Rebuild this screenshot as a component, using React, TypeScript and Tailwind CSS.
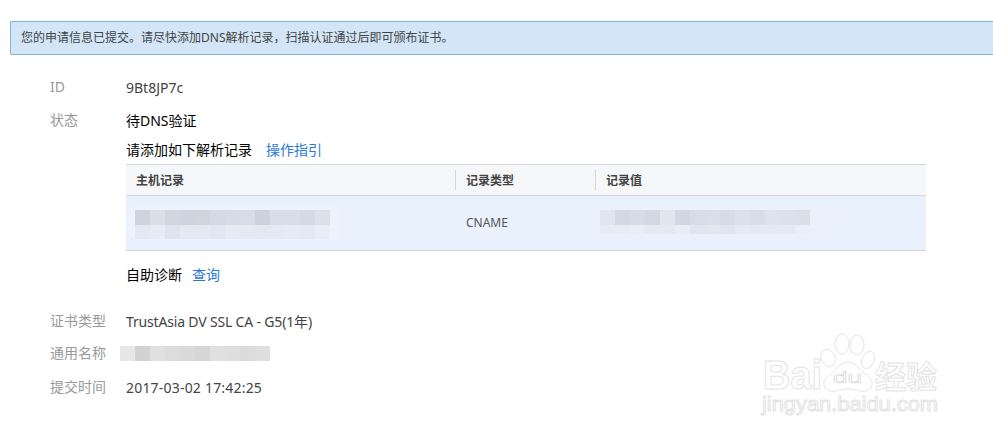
const font = '[font-family:"Noto_Sans","Noto_Sans_CJK_SC",sans-serif]';

const hostTop = ["#cdd3df","#d9e0ea","#d0d7e2","#cdd4df","#ced5df","#d3dae5","#d5dce7","#d6dde8","#cbd1dd","#d6deea","#d7deea","#d3dae6","#dae1ec"];
const hostBottom = ["#e2e9f4","#e6ecf6","#dde4ef","#e2e9f3","#e2e9f3","#e0e7f2","#e5ebf5","#e3eaf4","#e2e9f3","#e4eaf5","#e5ebf6","#e3e9f4","#e8eef8"];
const valueTop = ["#e0e6f0","#d2d9e4","#d5dce7","#d1d8e3","#e0e6f0","#d0d7e2","#d7dde8","#d9dfea","#d5dce7","#dbe1ec","#d7dee9","#dde3ee","#dbe1ec","#d9e0ea"];
const valueBottom = ["#e6ecf6","#e6ecf6","#e8eef8","#e4eaf4","#e3e9f3","#e8eef8","#e0e6f1","#e2e8f2","#dfe5f0","#e4eaf5","#e3e9f4","#e3e9f4","#e3e9f4","#e9eff9"];
const nameTop = ["#e7e7e7","#d2d2d2","#e0e0e0","#dcdcdc","#dadada","#d6d6d6","#e0e0e0","#dedede","#dbdbdb","#dfdfdf"];

function Cells({ colors, h }: { colors: string[]; h: string }) {
  return (
    <div className={`flex ${h}`}>
      {colors.map((c, i) => (
        <div key={i} className="w-[15px] h-full" style={{ backgroundColor: c }} />
      ))}
    </div>
  );
}

function Row({ label, children, cls }: { label: string; children: React.ReactNode; cls: string }) {
  return (
    <div className={`flex items-center ${cls}`}>
      <div className="w-[76px] shrink-0 text-[14px] leading-[20px] text-[#999]">{label}</div>
      {children}
    </div>
  );
}

function Watermark() {
  const outline = { fill: "#fff", stroke: "#e4e4e4", strokeWidth: 1 };
  return (
    <svg className="absolute left-[755px] top-[330px]" width="190" height="105" viewBox="0 0 190 105">
      <g {...outline}>
        <ellipse cx="73" cy="28" rx="7" ry="9" transform="rotate(-25 73 28)" />
        <ellipse cx="87" cy="14" rx="7" ry="10" />
        <ellipse cx="102" cy="15" rx="7" ry="10" />
        <ellipse cx="113" cy="30" rx="6" ry="9" transform="rotate(25 113 30)" />
        <path d="M93 32c8 0 10 6 16 11 5 4 9 7 8 12-1 5-6 7-12 6-4-1-7-2-12-2s-8 1-12 2c-6 1-11-1-12-6-1-5 3-8 8-12 6-5 8-11 16-11z" />
      </g>
      <text x="8" y="59" fontFamily="Liberation Sans, sans-serif" fontWeight="700" fontSize="40" textLength="59" lengthAdjust="spacingAndGlyphs" {...outline}>Bai</text>
      <text x="78" y="53" fontFamily="Liberation Sans, sans-serif" fontSize="17" textLength="29" lengthAdjust="spacingAndGlyphs" fill="#fff" stroke="#dcdcdc" strokeWidth="0.7">du</text>
      <text x="120" y="58" fontFamily="Noto Sans CJK SC, sans-serif" fontWeight="700" fontSize="31" textLength="62" lengthAdjust="spacingAndGlyphs" {...outline}>经验</text>
      <text x="7" y="81" fontFamily="Liberation Sans, sans-serif" fontSize="20" textLength="176" lengthAdjust="spacingAndGlyphs" {...outline}>jingyan.baidu.com</text>
    </svg>
  );
}

export default function App() {
  return (
    <div className={`relative h-[440px] w-[993px] overflow-hidden bg-white pt-[21px] pl-[10px] ${font}`}>
      <div className="flex h-[34px] items-center rounded-l-[2px] border border-r-0 border-[#7fb3e0] bg-[#d2e6f7] pl-[10px] text-[12px] text-[#444]">
        您的申请信息已提交。请尽快添加DNS解析记录，扫描认证通过后即可颁布证书。
      </div>

      <div className="pl-[40px]">
        <Row label="ID" cls="mt-[22px] h-[20px]">
          <span className="text-[14px] text-[#444]">9Bt8JP7c</span>
        </Row>

        <div className="mt-[13px] flex">
          <div className="w-[76px] shrink-0 text-[14px] leading-[20px] text-[#999]">状态</div>
          <div className="w-[800px]">
            <div className="mt-[1px] text-[14px] leading-[20px] text-[#000]">待DNS验证</div>
            <div className="mt-[8px] flex h-[20px] items-center text-[14px] text-[#000]">
              <span>请添加如下解析记录</span>
              <span className="ml-[14px] text-[#2a79d8]">操作指引</span>
            </div>
            <div className="mt-[5px] border-y border-[#cfd4e0]">
              <div className="flex h-[31px] items-center border-b border-[#d3d7e2] bg-[#f6f7f9] text-[12px] font-bold text-[#444]">
                <div className="h-[20px] w-[329px] pl-[10px] leading-[22px]">主机记录</div>
                <div className="h-[20px] w-[140px] border-l border-[#d5d5d5] pl-[10px] leading-[22px]">记录类型</div>
                <div className="h-[20px] flex-1 border-l border-[#d5d5d5] pl-[10px] leading-[22px]">记录值</div>
              </div>
              <div className="flex h-[54px] bg-[#e9f1fc] text-[12px] text-[#555]">
                <div className="w-[330px]">
                  <div className="mt-[9px] h-[35px] w-[214px] rounded-l-[14px] rounded-r-[6px] bg-[#edf3fd] pl-[9px] pt-[5px]">
                    <Cells colors={hostTop} h="h-[15px]" />
                    <Cells colors={hostBottom} h="h-[14px]" />
                  </div>
                </div>
                <div className="flex w-[140px] items-center pl-[10px]">CNAME</div>
                <div className="flex-1 pl-[4px]">
                  <div className="mt-[5px] h-[33px] w-[236px] rounded-l-[12px] rounded-tr-[14px] bg-[#ebf1fc] pt-[9px]">
                    <Cells colors={valueTop} h="h-[15px]" />
                    <Cells colors={valueBottom} h="h-[9px]" />
                  </div>
                </div>
              </div>
            </div>
            <div className="mt-[13px] flex h-[20px] items-center text-[14px] text-[#000]">
              <span>自助诊断</span>
              <span className="ml-[10px] text-[#2a79d8]">查询</span>
            </div>
          </div>
        </div>

        <Row label="证书类型" cls="mt-[27px] h-[20px]">
          <span className="text-[14px] tracking-[-0.17px] text-[#444]">TrustAsia DV SSL CA - G5(1年)</span>
        </Row>
        <Row label="通用名称" cls="mt-[12px] h-[20px]">
          <div className="-ml-[6px]">
            <Cells colors={nameTop} h="h-[15px]" />
          </div>
        </Row>
        <Row label="提交时间" cls="mt-[14px] h-[20px]">
          <span className="text-[14px] tracking-[0.2px] text-[#444]">2017-03-02 17:42:25</span>
        </Row>
      </div>

      <Watermark />
    </div>
  );
}
